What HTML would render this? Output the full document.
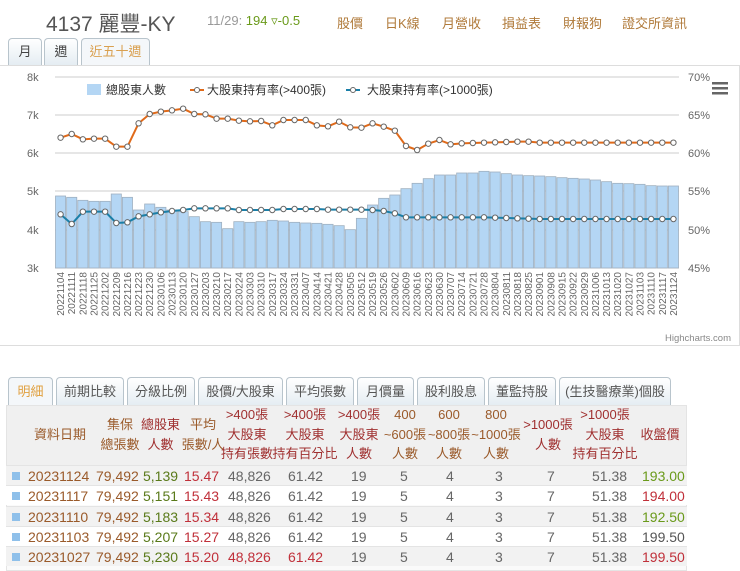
<!DOCTYPE html>
<html><head><meta charset="utf-8"><style>
*{margin:0;padding:0;box-sizing:border-box}
body{width:740px;height:571px;overflow:hidden;background:#fff;font-family:"Liberation Sans","Noto Sans CJK TC",sans-serif;position:relative;color:#555}
.a{position:absolute;white-space:nowrap}
.tab{position:absolute;top:38px;height:28px;border:1px solid #b8c4cc;border-bottom:none;border-radius:4px 4px 0 0;background:linear-gradient(#fff,#e4ecf2);font-size:13px;color:#444;text-align:center;line-height:26px}
.t2{position:absolute;top:377px;height:29px;border:1px solid #b8c4cc;border-bottom:none;border-radius:4px 4px 0 0;background:linear-gradient(#fff,#e4ecf2);font-size:13px;color:#555;text-align:center;line-height:28px}
.lk{color:#b07a3a;font-size:13px;top:13px}
.h{position:absolute;font-size:13px;text-align:center;line-height:19.5px;color:#9a5a2a;white-space:nowrap}
.r{color:#a03030}
.row{position:absolute;left:6px;width:681px;height:20px;font-size:14px;line-height:20px}
.row span{position:absolute;white-space:nowrap}
</style></head><body>
<div class="a" style="left:46px;top:8px;font-size:21px;color:#555">4137 麗豐-KY</div>
<div class="a" style="left:207px;top:13px;font-size:13px;color:#999">11/29: <span style="color:#6a9a1a">194</span> <span style="color:#6a9a1a">▿-0.5</span></div>
<div class="a lk" style="left:337px">股價</div>
<div class="a lk" style="left:385px">日K線</div>
<div class="a lk" style="left:442px">月營收</div>
<div class="a lk" style="left:502px">損益表</div>
<div class="a lk" style="left:563px">財報狗</div>
<div class="a lk" style="left:622px">證交所資訊</div>
<div class="tab" style="left:8px;width:34px">月</div>
<div class="tab" style="left:44px;width:34px">週</div>
<div class="tab" style="left:81px;width:69px;color:#d9a050;background:#f4f7fa">近五十週</div>
<div class="a" style="left:0;top:65px;width:740px;height:281px;border:1px solid #ddd;border-left:none"></div>
<svg class="a" style="left:0;top:0" width="740" height="350" id="ch"></svg>
<div class="t2" style="left:8px;width:45px;color:#e0a040;background:#f4f7fa">明細</div>
<div class="t2" style="left:56px;width:68px">前期比較</div>
<div class="t2" style="left:127px;width:68px">分級比例</div>
<div class="t2" style="left:198px;width:85px">股價/大股東</div>
<div class="t2" style="left:286px;width:68px">平均張數</div>
<div class="t2" style="left:357px;width:57px">月價量</div>
<div class="t2" style="left:417px;width:68px">股利股息</div>
<div class="t2" style="left:488px;width:68px">董監持股</div>
<div class="t2" style="left:559px;width:112px">(生技醫療業)個股</div>
<div class="a" style="left:6px;top:405px;width:681px;height:166px;border:1px solid #e4e4e4;background:#fafafa"></div>
<div class="a" style="left:7px;top:406px;width:679px;height:59px;background:#f0f0f0"></div>
<div class="h" style="left:30px;top:425px;width:60px">資料日期</div>
<div class="h" style="left:95px;top:415px;width:50px">集保<br>總張數</div>
<div class="h r" style="left:138px;top:415px;width:45px">總股東<br><span style="color:#a03030">人數</span></div>
<div class="h" style="left:178px;top:415px;width:50px">平均<br>張數/人</div>
<div class="h r" style="left:217px;top:405px;width:60px">&gt;400張<br>大股東<br>持有張數</div>
<div class="h r" style="left:270px;top:405px;width:70px">&gt;400張<br>大股東<br>持有百分比</div>
<div class="h r" style="left:335px;top:405px;width:48px">&gt;400張<br>大股東<br>人數</div>
<div class="h" style="left:380px;top:405px;width:50px">400<br>~600張<br>人數</div>
<div class="h" style="left:424px;top:405px;width:50px">600<br>~800張<br>人數</div>
<div class="h" style="left:468px;top:405px;width:56px">800<br>~1000張<br>人數</div>
<div class="h r" style="left:520px;top:415px;width:56px">&gt;1000張<br>人數</div>
<div class="h r" style="left:570px;top:405px;width:70px">&gt;1000張<br>大股東<br>持有百分比</div>
<div class="h r" style="left:635px;top:425px;width:50px">收盤價</div>
<div id="rows"></div>
<script>
var s='';
var g=[77,115,153,191,230,268];
g.forEach(function(y){s+='<line x1="55" x2="679" y1="'+y+'" y2="'+y+'" stroke="#ccc"/>';});
['8k','7k','6k','5k','4k','3k'].forEach(function(t,i){s+='<text x="27" y="'+(g[i]+4)+'" font-size="11" fill="#666">'+t+'</text>';});
['70%','65%','60%','55%','50%','45%'].forEach(function(t,i){s+='<text x="688" y="'+(g[i]+4)+'" font-size="11" fill="#666">'+t+'</text>';});
var b=[303,307,316,319,319,297,307,345,327,337,345,350,365,380,382,401,380,382,380,376,378,382,384,385,388,392,404,370,330,310,300,281,265,251,240,240,234,234,229,231,236,240,242,243,245,248,250,252,255,260,265,266,268,272,273,273];
var o=[128,117,133,131,131,155,155,85,57,50,46,41,57,58,71,71,77,79,78,91,75,75,75,91,94,80,97,98,85,95,107,153,165,146,135,148,145,144,143,142,141,140,140,143,143,143,143,143,143,143,143,143,143,143,143,143];
var c=[358,387,350,350,350,384,382,364,358,352,348,345,340,340,340,340,345,345,345,345,342,342,342,342,344,344,344,344,345,348,355,367,367,367,367,367,367,367,367,368,369,370,371,372,372,372,372,372,372,372,372,372,372,372,372,372];
var n=56,w=624/n,d=['20221104'];
var dt=new Date(2022,10,4);
for(var i=1;i<n;i++){dt.setDate(dt.getDate()+7);d.push(''+dt.getFullYear()+('0'+(dt.getMonth()+1)).slice(-2)+('0'+dt.getDate()).slice(-2));}
for(var i=0;i<n;i++){var x=55+i*w,y=95+b[i]/3;s+='<rect x="'+(x+0.5)+'" y="'+y+'" width="'+(w-1)+'" height="'+(268-y)+'" fill="#b4d6f4" stroke="#9fb0c0" stroke-width="0.8"/>';
s+='<text transform="translate('+(x+w/2+3.5)+',272) rotate(-90)" text-anchor="end" font-size="10" fill="#666">'+d[i]+'</text>';}
function ln(a,col){var p='';for(var i=0;i<n;i++)p+=(i?'L':'M')+(55+(i+0.5)*w)+' '+(95+a[i]/3);s+='<path d="'+p+'" fill="none" stroke="'+col+'" stroke-width="2"/>';
for(var i=0;i<n;i++)s+='<circle cx="'+(55+(i+0.5)*w)+'" cy="'+(95+a[i]/3)+'" r="2.7" fill="#fff" stroke="#666" stroke-width="1"/>';}
ln(o,'#e06a1a');ln(c,'#1a7fa8');
s+='<rect x="87" y="84" width="14" height="11" fill="#b4d6f4"/><text x="106" y="94" font-size="12" fill="#333">總股東人數</text>';
s+='<line x1="190" x2="204" y1="90" y2="90" stroke="#e06a1a" stroke-width="2"/><circle cx="197" cy="90" r="2.5" fill="#fff" stroke="#666"/><text x="207" y="94" font-size="12" fill="#333">大股東持有率(&gt;400張)</text>';
s+='<line x1="346" x2="360" y1="90" y2="90" stroke="#1a7fa8" stroke-width="2"/><circle cx="353" cy="90" r="2.5" fill="#fff" stroke="#666"/><text x="367" y="94" font-size="12" fill="#333">大股東持有率(&gt;1000張)</text>';
s+='<rect x="712" y="82" width="16" height="2.5" fill="#666"/><rect x="712" y="87" width="16" height="2.5" fill="#666"/><rect x="712" y="92" width="16" height="2.5" fill="#666"/>';
s+='<text x="665" y="341" font-size="9.5" fill="#888">Highcharts.com</text>';
document.getElementById('ch').innerHTML=s;
var R=[['20231124','5,139','15.47','#666','#666','193.00','#6a9a1a'],['20231117','5,151','15.43','#666','#666','194.00','#c0303a'],['20231110','5,183','15.34','#666','#666','192.50','#6a9a1a'],['20231103','5,207','15.27','#666','#666','199.50','#555'],['20231027','5,230','15.20','#c0303a','#c0303a','199.50','#c0303a']];
var h='';
R.forEach(function(r,i){var t=465+i*20.3;h+='<div class="row" style="top:'+t+'px;background:'+(i%2?'#fff':'#f2f2f2')+';border-top:1px solid #e4e4e4">'+
'<span style="left:6px;top:6px;width:8px;height:8px;background:#8fc0ea"></span>'+
'<span style="left:22px;color:#9a5a2a">'+r[0]+'</span>'+
'<span style="left:90px;color:#9a5a2a">79,492</span>'+
'<span style="left:137px;color:#5a7a1a">'+r[1]+'</span>'+
'<span style="left:178px;color:#c0303a">'+r[2]+'</span>'+
'<span style="left:222px;color:'+r[3]+'">48,826</span>'+
'<span style="left:282px;color:'+r[4]+'">61.42</span>'+
'<span style="left:345px;color:#666">19</span>'+
'<span style="left:394px;color:#666">5</span>'+
'<span style="left:440px;color:#666">4</span>'+
'<span style="left:489px;color:#666">3</span>'+
'<span style="left:541px;color:#666">7</span>'+
'<span style="left:586px;color:#666">51.38</span>'+
'<span style="left:636px;color:'+r[6]+'">'+r[5]+'</span></div>';});
document.getElementById('rows').innerHTML=h;
</script>
</body></html>
